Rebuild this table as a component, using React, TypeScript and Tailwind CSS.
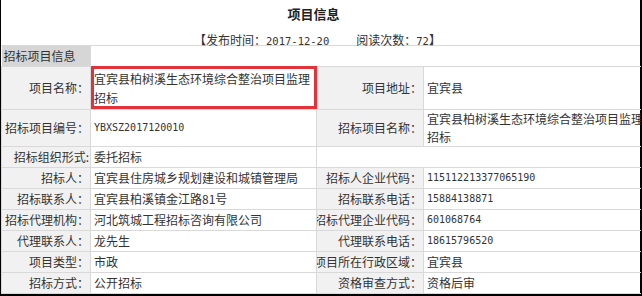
import React from 'react';

type Cell = { label: string; value?: string; mono?: boolean };
type Row = { left: Cell; right?: Cell; h: number; wrapRight?: boolean };

const ROWS: Row[] = [
  { left: { label: '招标项目编号：', value: 'YBXSZ2017120010', mono: true }, right: { label: '招标项目名称：', value: '宜宾县柏树溪生态环境综合整治项目监理招标' }, h: 37, wrapRight: true },
  { left: { label: '招标组织形式:', value: '委托招标' }, h: 21 },
  { left: { label: '招标人：', value: '宜宾县住房城乡规划建设和城镇管理局' }, right: { label: '招标人企业代码：', value: '115112213377065190', mono: true }, h: 21 },
  { left: { label: '招标联系人：', value: '宜宾县柏溪镇金江路81号' }, right: { label: '招标联系电话：', value: '15884138871', mono: true }, h: 21 },
  { left: { label: '招标代理机构：', value: '河北筑城工程招标咨询有限公司' }, right: { label: '招标代理企业代码：', value: '601068764', mono: true }, h: 21 },
  { left: { label: '代理联系人：', value: '龙先生' }, right: { label: '代理联系电话：', value: '18615796520', mono: true }, h: 21 },
  { left: { label: '项目类型：', value: '市政' }, right: { label: '项目所在行政区域：', value: '宜宾县' }, h: 21 },
  { left: { label: '招标方式：', value: '公开招标' }, right: { label: '资格审查方式：', value: '资格后审' }, h: 21 },
];

const labelCls = 'bg-[#f1f1f1] border border-[#d9d9d9] pr-[1px]';
const valueCls = 'border border-[#d9d9d9] pl-[3px] overflow-hidden';

function Label({ text }: { text: string }) {
  return <div className="flex justify-end overflow-hidden whitespace-nowrap">{text}</div>;
}

function Value({ cell }: { cell: Cell }) {
  if (cell.mono) {
    return <span className='font-["DejaVu_Sans_Mono",monospace] text-[10px] align-top'>{cell.value}</span>;
  }
  return <span>{cell.value}</span>;
}

export default function App() {
  return (
    <div className='w-[642px] h-[296px] bg-white overflow-hidden font-["Noto_Sans_CJK_SC",sans-serif] text-[12px] text-[#333]'>
      <div className="border-l border-r-2 border-b-2 border-black">
        <div className="h-[35px] pt-[4px] pr-[14px] leading-[20px] text-center font-bold text-[13px] text-[#222]">项目信息</div>
        <div className="h-[10px] leading-[10px] flex items-center justify-center mr-[6px]">
          <span>
            【发布时间：<span className='font-["DejaVu_Sans_Mono",monospace] text-[10.5px]'>2017-12-20</span>
          </span>
          <span className="ml-[27px]">
            阅读次数：<span className='font-["DejaVu_Sans_Mono",monospace] text-[10.5px]'>72</span>】
          </span>
        </div>
        <div className="border-b border-[#d9d9d9]"></div>
        <table className="w-[639px] table-fixed border-collapse leading-[19px]">
          <colgroup>
            <col className="w-[89px]" />
            <col className="w-[226px]" />
            <col className="w-[107px]" />
            <col className="w-[217px]" />
          </colgroup>
          <tbody>
            <tr className="h-[20px]">
              <td className="bg-[#d6d6d6] border-b border-r border-[#d9d9d9] pl-[2px] whitespace-nowrap">招标项目信息</td>
              <td colSpan={3} className="border-b border-[#d9d9d9]"></td>
            </tr>
            <tr className="h-[43px]">
              <td className={labelCls}><Label text="项目名称：" /></td>
              <td className="border border-[#d9d9d9] pl-[3px] pr-[2px] outline-[3px] outline-solid outline-[#e2333b] -outline-offset-[3px] break-all">
                宜宾县柏树溪生态环境综合整治项目监理招标
              </td>
              <td className={labelCls}><Label text="项目地址：" /></td>
              <td className={`${valueCls} border-r-0 whitespace-nowrap`}>宜宾县</td>
            </tr>
            {ROWS.map((r, i) => (
              <tr key={i} style={{ height: r.h }}>
                <td className={labelCls}><Label text={r.left.label} /></td>
                <td className={`${valueCls} whitespace-nowrap`}><Value cell={r.left} /></td>
                {r.right ? (
                  <>
                    <td className={labelCls}><Label text={r.right.label} /></td>
                    <td className={`${valueCls} border-r-0`}>
                      {r.wrapRight ? (
                        <div className="w-[218px] break-all leading-[18px]">{r.right.value}</div>
                      ) : (
                        <div className="whitespace-nowrap"><Value cell={r.right} /></div>
                      )}
                    </td>
                  </>
                ) : (
                  <td colSpan={2} className="border border-[#d9d9d9] border-r-0"></td>
                )}
              </tr>
            ))}
          </tbody>
        </table>
      </div>
    </div>
  );
}
